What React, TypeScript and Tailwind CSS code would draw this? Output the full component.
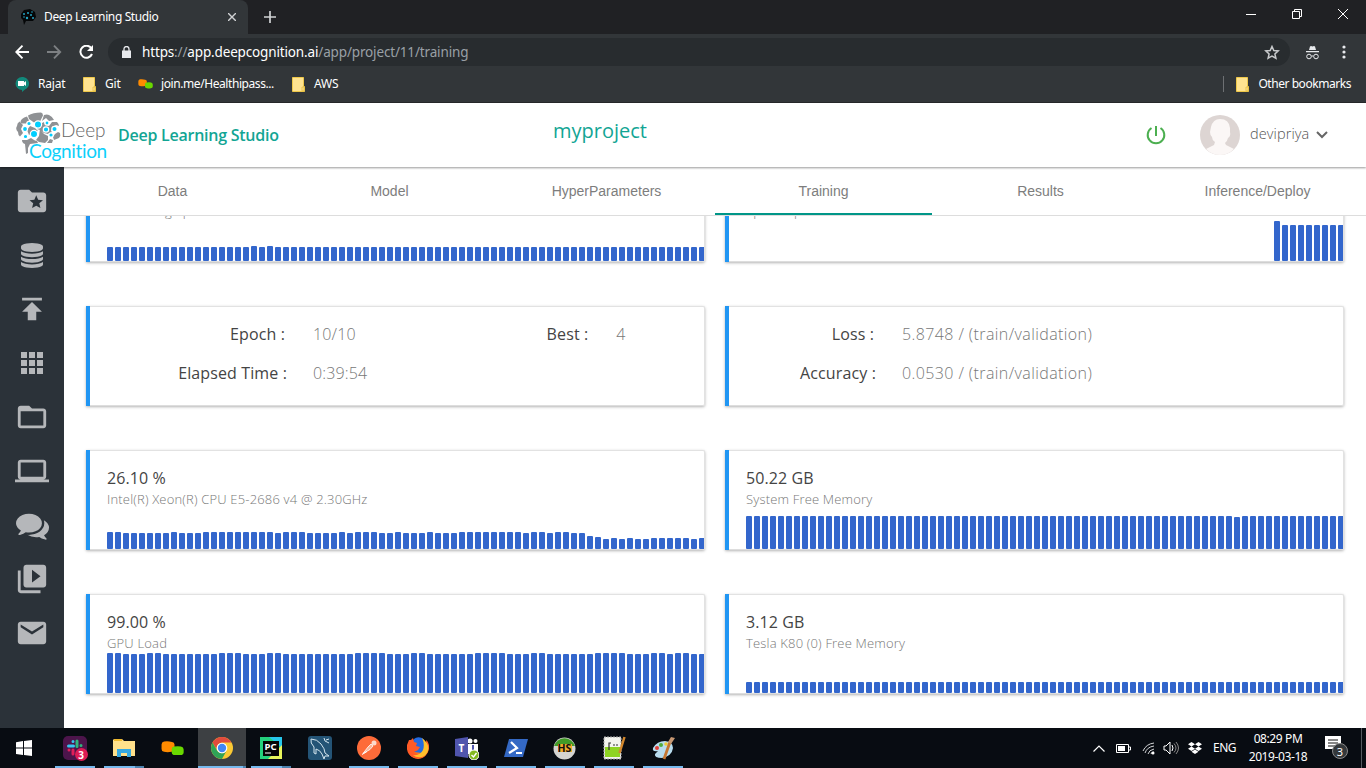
import React from "react";
import { MdFolderSpecial, MdPublish, MdFolderOpen, MdLaptop, MdVideoLibrary, MdEmail } from "react-icons/md";
import { FaDropbox } from "react-icons/fa";

const cpu = "HHLLLLLLHLLLHHHHHHHHHLHHHLLLLHLHHHLLHLLLHLLLHHHHHHHHLHHLHHLL";
const cpuBars = [...cpu].map((c) => (c === "H" ? 17 : 16)).concat([13, 12, 10, 11, 10, 11, 10, 10, 11, 11, 11, 11, 11, 10, 11]);
const gpu = "HHLLLHHLLLLLLLHHHLLLHHLLLLLLLLLHHHHLLLHHLLLLLLHHHHLLLHHLLLLLLHHHHLLLHHLHHLL";
const gpuBars = [...gpu].map((c) => (c === "H" ? 40 : 39));
const batchBars = Array.from({ length: 75 }, (_, i) => (i === 18 || i === 20 ? 15 : 14));
const memBars = Array.from({ length: 75 }, (_, i) => (i === 61 ? 32 : 33));
const teslaBars = Array.from({ length: 75 }, () => 11);
const epochBars = Array.from({ length: 75 }, (_, i) => (i < 66 ? 0 : i === 66 ? 40 : 36));

function Bars({ data }: { data: number[] }) {
  return (
    <div className="absolute bottom-px left-[17px] right-px flex h-10 items-end gap-[2px] overflow-hidden">
      {data.map((h, i) => (
        <div key={i} className="w-[6px] shrink-0 rounded-[1px] bg-[#3366cc]" style={{ height: h }} />
      ))}
    </div>
  );
}

function Card({ children }: { children: React.ReactNode }) {
  return (
    <div className="relative h-[100px] w-[619px] shrink-0 rounded-r-[2px] border-l-4 border-[#2196f3] bg-white shadow-[0_1px_3px_rgba(0,0,0,0.3),inset_0_1px_0_#e2e2e2,inset_-1px_0_0_#e2e2e2,inset_0_-1px_0_#ddd]">
      {children}
    </div>
  );
}

function Metric({ value, label, data }: { value: string; label: string; data: number[] }) {
  return (
    <Card>
      <div className="flex flex-col pl-[17px] pt-[17px]">
        <span className="whitespace-nowrap text-[16px] leading-[22px] tracking-[0.100px] text-[#444]">{value}</span>
        <span className="whitespace-nowrap text-[13px] font-light leading-[20px] tracking-[0.180px] text-[#777]">{label}</span>
      </div>
      <Bars data={data} />
    </Card>
  );
}

function Row({ k, v, kw, vt = "tracking-[0.150px]" }: { k: string; v: string; kw: string; vt?: string }) {
  return (
    <div className="flex h-[39px] items-center text-[16px]">
      <span className={`${kw} whitespace-nowrap text-right tracking-[0.120px] text-[#444]`}>{k}</span>
      <span className={`${vt} whitespace-nowrap font-light text-[#777]`}>{v}</span>
    </div>
  );
}

function BookmarkFolder() {
  return (
    <svg width="13" height="15" viewBox="0 0 13 15">
      <path d="M.5.5h11v9h1v5H.5z" fill="#ffe390" stroke="#efc84a" />
      <path d="M10 10h2v4h-2z" fill="#ffe390" stroke="#e3b93b" strokeWidth=".7" />
    </svg>
  );
}

function JoinMe({ w }: { w: number }) {
  return (
    <svg width={w} height={w * 0.65} viewBox="0 0 23 15">
      <path d="M3 .5Q7-.2 11 1q2.800.5 2.500 3v4q0 2.500-3 2.800-4 .8-7.500 0Q.500 10.500.5 8V3.500Q.500 1 3 .5z" fill="#ff8b00" />
      <path d="M13 5.500q4-.7 7 0 2.700.5 2.700 3v3q0 2.500-3 2.800-3 .6-6 0-3-.3-3-2.800V8q0-2.200 2.300-2.500z" fill="#69d800" />
    </svg>
  );
}

function Brain() {
  return (
    <svg width="46" height="43" viewBox="0 0 46 43">
      <g fill="#8f9194">
        <path d="M12 3.500Q17 .500 25 .500q2 .5 2 3l-3 6-6 1-5-3.500z" />
        <path d="m11 4.500 2 4-3 3-4 0Q3 10 6 7q2-2 5-2.500zM3.500 9.500 7 13l-2 4 2 4-3 3.500Q2 23 2 20q-3-3-1-6 0-3 2.500-4.500z" />
        <path d="m14 14 5 2 3 3-5 1-4 3-2-5z" />
        <path d="M28 3q3-1 5 0 4 2 5 5l-5 1-3-3-4 3z" />
        <path d="M25 11.500 28 10l1 3 4 1 3-4 5 0q2 2 2 4l-3-1-4 2-1 4 1 1-4 2-4-1-4-3-3-1z" />
        <path d="m42 20 2 1q1 3-1 5l-5 2-1-3 2-3zM24 17l4 5 4 2 0 4-3 3-6-1-3-2 3-4z" />
        <path d="M6 28h5l4-2q4 3 6 3l1 2-8 1-2 4v5l-2 1-1-10q-3-1-3-4zM34 27l3 1-1 3-5 0z" />
      </g>
      <g fill="#00cfff" stroke="#fff" strokeWidth="1.200">
        <circle cx="22" cy="12.500" r="3.600" /><circle cx="18" cy="22" r="3.600" /><circle cx="31" cy="11" r="2" />
        <circle cx="13" cy="11.500" r="2.200" /><circle cx="9" cy="17" r="2.500" /><circle cx="9.500" cy="24.500" r="2.200" />
        <circle cx="30" cy="17.500" r="2.700" /><circle cx="38.500" cy="17" r="2.600" /><circle cx="35" cy="23" r="2.200" />
      </g>
    </svg>
  );
}

function Browser() {
  return (
    <header className="flex h-[103px] shrink-0 flex-col bg-[#323639] font-['Noto_Sans'] text-white">
      <div className="flex h-[34px] shrink-0 bg-[#202124] pl-2">
        <div className="flex h-[34px] w-[240px] items-center rounded-t-lg bg-[#323639] pl-[12px] pr-[12px]">
          <svg width="17" height="16" viewBox="0 0 17 16">
            <path d="M1 5 4 1l6-1 5 3 1 5-3 4-7 0-2 4-1-5-2-2z" fill="#050708" />
            <g fill="#25a5c4"><circle cx="4" cy="5" r="1" /><circle cx="8" cy="4" r="1" /><circle cx="7" cy="9" r="1.200" /><circle cx="11" cy="6" r="1" /><circle cx="13" cy="9" r="1" /><circle cx="4" cy="8" r=".8" /><circle cx="12" cy="3" r=".8" /></g>
          </svg>
          <span className="ml-[7px] flex-1 whitespace-nowrap text-[12px] tracking-[-0.380px]">Deep Learning Studio</span>
          <svg width="8" height="8" viewBox="0 0 8 8" stroke="#d0d2d4" strokeWidth="1.400"><path d="m0 0 8 8M8 0 0 8" /></svg>
        </div>
        <svg className="ml-[16px] mt-[11px]" width="12" height="12" stroke="#d0d2d4" strokeWidth="1.700"><path d="M0 6h12M6 0v12" /></svg>
        <div className="ml-auto flex items-start gap-[36px] pr-[18px] pt-[9px]">
          <svg width="10" height="11" stroke="#fff"><path d="M0 5.500h10" /></svg>
          <svg width="10" height="10" stroke="#fff" fill="none"><path d="M.5 2.500h7v7h-7zM2.500 2.500v-2h7v7h-2" /></svg>
          <svg width="10" height="10" stroke="#fff"><path d="m0 0 10 10M10 0 0 10" /></svg>
        </div>
      </div>
      <div className="flex h-[36px] shrink-0 items-center pl-[15px]">
        <svg width="15" height="14" fill="none" stroke="#fff" strokeWidth="1.900"><path d="M14 7H1.500M7.500.7 1.300 7l6.200 6.300" /></svg>
        <svg className="ml-[17px]" width="15" height="14" fill="none" stroke="#7d8083" strokeWidth="1.900"><path d="M0 7h12.500M7 .7 13.200 7 7 13.300" /></svg>
        <svg className="ml-[17px]" width="15" height="14" fill="none" stroke="#fff" strokeWidth="2"><path d="M12.500 3.500A6 6 0 1 0 13 9" /><path d="M14 0v6H8z" fill="#fff" stroke="none" /></svg>
        <div className="ml-[14px] flex h-7 w-[1182px] items-center rounded-full bg-[#282c2f] pl-[14px] pr-[10px]">
          <svg width="9" height="12" fill="none"><path d="M2 5V3a2.500 2.500 0 0 1 5 0v2" stroke="#e8eaed" strokeWidth="1.300" /><path d="M0 4.500h9V12H0z" fill="#e8eaed" /></svg>
          <span className="ml-[11px] whitespace-nowrap text-[13.500px] tracking-[-0.150px] text-[#9aa0a6]"><span className="text-white">https</span>://<span className="text-white">app.deepcognition.ai</span>/app/project/11/training</span>
          <svg className="ml-auto" width="16" height="15" viewBox="0 0 16 15" fill="none" stroke="#c8cacc" strokeWidth="1.500"><path d="m8 1.500 1.800 4 4.400.400-3.300 3 1 4.300L8 11l-3.900 2.200 1-4.300-3.300-3 4.400-.4z" /></svg>
        </div>
        <svg className="ml-[15px]" width="15" height="15" viewBox="0 0 15 15" fill="#e8eaed"><path d="M5 1.500 6 1l1.500.5L9 1l1 .5L11 5H4zM1 6h13v1.200H1z" /><g fill="none" stroke="#e8eaed"><circle cx="4" cy="11.500" r="2.300" /><circle cx="11" cy="11.500" r="2.300" /><path d="M6.500 11h2" /></g></svg>
        <svg className="ml-[22px]" width="4" height="14" fill="#e8eaed"><circle cx="2" cy="2" r="1.600" /><circle cx="2" cy="7" r="1.600" /><circle cx="2" cy="12" r="1.600" /></svg>
      </div>
      <div className="flex h-[33px] shrink-0 items-center border-b border-[#27292b] pb-[5px] pl-[15px] pr-[15px] pt-px text-[12px] tracking-[-0.200px]">
        <svg width="14" height="15" viewBox="0 0 14 15"><path d="M7 0a6.500 6.500 0 0 1 3 12.500L7 15v-2A6.500 6.500 0 0 1 7 0z" fill="#12897b" /><path d="M3 4h6v1.500L11 4v5L9 7.500V9H3z" fill="#fff" /></svg>
        <span className="ml-[9px] w-[45px]">Rajat</span>
        <BookmarkFolder /><span className="ml-[9px] w-[33px]">Git</span>
        <JoinMe w={15} /><span className="ml-[8px] w-[131px] whitespace-nowrap tracking-[-0.420px]">join.me/Healthipass...</span>
        <BookmarkFolder /><span className="ml-[9px]">AWS</span>
        <div className="ml-auto mr-[12px] h-4 w-px bg-[#6d7073]" />
        <BookmarkFolder /><span className="ml-[9px] whitespace-nowrap tracking-[-0.450px]">Other bookmarks</span>
      </div>
    </header>
  );
}

function AppBar() {
  return (
    <div className="z-10 flex h-[64px] shrink-0 items-center bg-white pl-[16px] shadow-[0_1px_2px_rgba(0,0,0,0.4)]">
      <div className="relative mt-[2px] h-[48px] w-[93px]">
        <Brain />
        <span className="absolute left-[45px] top-[8px] font-['Lato'] text-[19px] font-light leading-[20px] text-[#666]">Deep</span>
        <span className="absolute left-[13px] top-[29px] font-['Lato'] text-[19px] leading-[20px] tracking-[-0.350px] text-[#0cd0fb]">Cognition</span>
      </div>
      <span className="ml-[9px] w-[435px] whitespace-nowrap text-[16px] font-semibold tracking-[-0.250px] text-[#12a594]">Deep Learning Studio</span>
      <span className="mb-[8px] whitespace-nowrap text-[20px] text-[#12a594]">myproject</span>
      <svg className="ml-auto" width="20" height="20" fill="none" stroke="#4caf50" strokeWidth="2"><path d="M10 1v10M5.500 3a8.300 8.300 0 1 0 9 0" /></svg>
      <svg className="ml-[34px]" width="40" height="40" viewBox="0 0 40 40">
        <circle cx="20" cy="20" r="20" fill="#ddd5d3" />
        <path d="M11 12q2-8 9-8 9 0 10 9v4q1 4-2 6-1 4-3 5l1 2 8 4q-6 6-14 6T6 34l8-4 1-3q-3-2-3-5-2-2-2-5z" fill="#fbf7f6" />
      </svg>
      <span className="mb-[2px] ml-[10px] w-[60px] text-[14.500px] font-light tracking-[0.100px] text-[#555]">devipriya</span>
      <svg className="ml-[6px] mr-[38px]" width="12" height="8" fill="none" stroke="#666" strokeWidth="2"><path d="m1 1 5 5 5-5" /></svg>
    </div>
  );
}

function DatabaseIcon() {
  return (
    <svg width="22" height="25" viewBox="128 0 1536 1792" preserveAspectRatio="none" fill="currentColor">
      <path d="M896 768q237 0 443-43t325-127v170q0 69-103 128t-280 93.500-385 34.500-385-34.500-280-93.500-103-128v-170q119 84 325 127t443 43zm0 768q237 0 443-43t325-127v170q0 69-103 128t-280 93.500-385 34.500-385-34.500-280-93.500-103-128v-170q119 84 325 127t443 43zm0-384q237 0 443-43t325-127v170q0 69-103 128t-280 93.500-385 34.500-385-34.500-280-93.500-103-128v-170q119 84 325 127t443 43zm0-1152q208 0 385 34.500t280 93.500 103 128v128q0 69-103 128t-280 93.500-385 34.500-385-34.500-280-93.500-103-128v-128q0-69 103-128t280-93.500 385-34.500z" />
    </svg>
  );
}

function CommentsIcon() {
  return (
    <svg width="33" height="33" viewBox="0 0 1792 1792" fill="currentColor">
      <path d="M1408 768q0 139-94 257t-256.500 186.500-353.500 68.500q-86 0-176-16-124 88-278 128-36 9-86 16h-3q-11 0-20.500-8t-11.500-21q-1-3-1-6.500t.5-6.500 2-6l2.500-5 3.500-5.500 4-5 4.500-5 4-4.500q5-6 23-25t26-29.500 22.500-29 25-38.500 20.500-44q-124-72-195-177t-71-224q0-139 94-257t256.500-186.500 353.500-68.500 353.500 68.500 256.500 186.500 94 257zm384 256q0 120-71 224.500t-195 176.500q10 24 20.500 44t25 38.500 22.500 29 26 29.500 23 25q1 1 4 4.500t4.500 5 4 5 3.500 5.500l2.500 5 2 6 .5 6.500-1 6.500q-3 14-13 22t-22 7q-50-7-86-16-154-40-278-128-90 16-176 16-271 0-472-132 58 4 88 4 161 0 309-45t264-129q125-92 192-212t67-254q0-77-23-152 129 71 204 178t75 230z" />
    </svg>
  );
}

function Sidebar() {
  const icons = [
    <MdFolderSpecial size={34} />, <DatabaseIcon />, <MdPublish size={34} />,
    <svg width="22" height="22" fill="currentColor"><path d="M0 0h6v6H0zM8 0h6v6H8zM16 0h6v6h-6zM0 8h6v6H0zM8 8h6v6H8zM16 8h6v6h-6zM0 16h6v6H0zM8 16h6v6H8zM16 16h6v6h-6z" /></svg>,
    <MdFolderOpen size={34} />, <MdLaptop size={34} />, <CommentsIcon />, <MdVideoLibrary size={34} />, <MdEmail size={34} />,
  ];
  return (
    <aside className="flex w-16 shrink-0 flex-col bg-[#2b3239] pt-[7px] text-[#b5b7ba]">
      {icons.map((ic, i) => <div key={i} className="flex h-[54px] items-center justify-center">{ic}</div>)}
    </aside>
  );
}

const tabs = ["Data", "Model", "HyperParameters", "Training", "Results", "Inference/Deploy"];

function Task({ children, split = false, idle = false, active = false }: { children: React.ReactNode; split?: boolean; idle?: boolean; active?: boolean }) {
  return (
    <div className={`flex h-10 shrink-0 flex-col items-center ${active ? "ml-px w-[48px] bg-[#3d4043]" : "w-[49px]"}`}>
      <div className="flex h-[38px] items-center justify-center pt-[2px]">{children}</div>
      {!idle && <div className={`flex h-[2px] ${active ? "w-full" : "w-10"} bg-[#76b9ed]`}>{split && <div className={`ml-auto bg-[#4c82ae] ${active ? "w-[3px]" : "w-[9px]"}`} />}</div>}
    </div>
  );
}

function Taskbar() {
  return (
    <footer className="flex h-10 shrink-0 bg-[#080c12] font-['Noto_Sans'] text-white">
      <div className="flex w-[50px] items-center justify-center pr-[2px]"><svg width="16" height="16" fill="#fff"><path d="M0 2.200 7 1v6.500H0zM8 1l8-1v7.500H8zM0 8.500h7V15l-7-1zM8 8.500h8V16l-8-1z" /></svg></div>
      <Task>
        <div className="relative h-6 w-6 rounded-[5px] bg-[#4c154b]">
          <svg width="24" height="24" fill="none" strokeWidth="3" strokeLinecap="round"><path d="M5.500 10h5M10 5.500v0" stroke="#36c5f0" /><path d="M14 5v5.500M18 9.500v0" stroke="#2eb67d" /><path d="M6 14v0M10 14v4" stroke="#e01e5a" /></svg>
          <div className="absolute left-[12px] top-[12px] flex h-[13px] w-[13px] items-center justify-center rounded-full bg-[#dc1c55] text-[10px] font-bold leading-none">3</div>
        </div>
      </Task>
      <Task split><svg width="22" height="20"><path d="M0 2 1 1h8l2 2h11v15H0z" fill="#ffe18b" /><path d="M1 1h8v2H1z" fill="#efb92e" /><path d="M4 18v-7h14v8h-4v-4H8v4H4z" fill="#36a9e1" /></svg></Task>
      <Task idle><JoinMe w={23} /></Task>
      <Task active split>
        <svg width="22" height="22" viewBox="0 0 22 22"><circle cx="11" cy="11" r="11" fill="#fbc934" /><path d="M1.500 5.500A11 11 0 0 1 20.500 5.500H11A5.500 5.500 0 0 0 6 13z" fill="#e14b3d" /><path d="M1.500 5.500A11 11 0 0 0 11 22l4.500-8.200A5.500 5.500 0 0 1 6.200 13.700z" fill="#2fa457" /><circle cx="11" cy="11" r="5.300" fill="#fff" /><circle cx="11" cy="11" r="4.200" fill="#4286f5" /></svg>
      </Task>
      <Task split>
        <svg width="22" height="22"><path d="M0 0h22v22H0z" fill="#24d17d" /><path d="M9 0h13v11z" fill="#27c7ec" /><path d="M22 8v14H8z" fill="#e8f65b" /><path d="M3 4h16v15H3z" fill="#050505" /><text x="4.500" y="12.500" fill="#fff" fontSize="9.500" fontWeight="bold" fontFamily="Noto Sans">PC</text><path d="M5 16h6" stroke="#fff" /></svg>
      </Task>
      <Task idle><svg width="24" height="24" fill="none" stroke="#d5e6ef"><rect width="24" height="24" rx="3" fill="#245476" stroke="none" /><path d="M3 3q6 0 10 5t4 9l4 3-4 0-1 3-2-5Q12 14 8 13v5L6 17V11Q2 7 3 3zM16 2l1 3 4 2M21 3l-3 1" /></svg></Task>
      <Task><svg width="24" height="24"><circle cx="12" cy="12" r="12" fill="#fd6b39" /><path d="m6 17.500 5-6.500 3-3 2 2-3 3.500z" fill="#f9b79c" stroke="#fff" strokeWidth=".8" /><circle cx="17" cy="7" r="2.500" fill="#fbd9cb" /><path d="m5 18.500 5-3" stroke="#fff" /></svg></Task>
      <Task><svg width="22" height="22"><circle cx="11" cy="12" r="10" fill="#ff7a19" /><path d="M4 5 7 2q3-3 8-1 4 3 4 9l-4 6-8-1z" fill="#246be0" /><path d="M2 3 0 8q-1 8 5 12 6 3 12 0 6-5 5-12-1-4-3-5 1 8-3 12-5 4-9 0l4-2 2-3-4-1 1-3-3-1-1-4-2 2z" fill="#ff5a26" /><path d="M15 1q8 6 6 13-2 5-6 6-6 1-9-2 7 1 10-5 2-6-1-12z" fill="#ffc02b" /></svg></Task>
      <Task>
        <svg width="24" height="24"><path d="M12 8h11v10H12z" fill="#fff" /><circle cx="15" cy="5" r="2.500" fill="#fff" /><circle cx="20.500" cy="5" r="2" fill="#fff" /><path d="M17 9h2v9h-2z" fill="#5055ad" /><path d="M0 3 13 1v21L0 20z" fill="#5055ad" /><text x="3.500" y="15.500" fill="#fff" fontSize="10" fontWeight="bold" fontFamily="Noto Sans">T</text><circle cx="19" cy="19" r="5" fill="#83b91d" stroke="#fff" /><path d="m16.500 19 2 2 3-4" fill="none" stroke="#fff" strokeWidth="1.400" /></svg>
      </Task>
      <Task><svg width="24" height="18"><path d="M5 0h19l-5 18H0z" fill="#3469c4" /><path d="m7 3 6 6-8 5M12 14h6" fill="none" stroke="#fff" strokeWidth="2.200" /></svg></Task>
      <Task><svg width="23" height="23"><circle cx="11.500" cy="11.500" r="11" fill="#d4d4d1" /><path d="M1 9a11 11 0 0 1 21 0z" fill="#419b27" /><path d="M5 7h14v8H5z" fill="#f0aa2a" /><text x="4.500" y="15" fill="#111" fontSize="10.500" fontWeight="bold" fontFamily="Noto Sans">HS</text></svg></Task>
      <Task><svg width="24" height="24"><path d="M2 1h17v22H2z" fill="#f4f4ee" stroke="#aaa" strokeDasharray="2 1" /><path d="M3 11h15v10H3z" fill="#8ed422" /><path d="M7 14V7h2M11 9h2M14 9h2" fill="none" stroke="#333" strokeWidth="1.200" /><path d="m22.500 1-5 16" stroke="#d4882c" strokeWidth="2.500" /></svg></Task>
      <Task><svg width="24" height="24"><path d="M2 12q4-7 12-7 8 1 8 7-1 8-11 10-8 0-7-4l3-3q-6 1-5-3z" fill="#b8dcee" /><circle cx="6" cy="12" r="2" fill="#e13f36" /><circle cx="10" cy="9" r="2" fill="#51ac3d" /><circle cx="15" cy="8" r="1.800" fill="#efcb36" /><path d="m13 23 6-17" stroke="#c57631" strokeWidth="2.800" /><path d="m17 6 3-5 4 1-4 6z" fill="#c69772" /></svg></Task>
      <div className="ml-auto flex items-center">
        <svg width="12" height="7" fill="none" stroke="#fff" strokeWidth="1.200"><path d="m.5 6.500 5.500-5.500 5.500 5.500" /></svg>
        <svg className="ml-[11px]" width="15" height="10" fill="none" stroke="#fff"><path d="M.5 1.500h12v8H.5zM13 4h1.500v3H13" /><path d="M2 3h7v5H2z" fill="#fff" stroke="none" /></svg>
        <svg className="ml-[11px]" width="13" height="13" fill="none" stroke="#d4d6d8"><path d="M1 9Q4 2 12 1M3 11Q5 5 12 4M6 12q1-4 6-5M9 12q0-2 3-2" /><circle cx="11" cy="11" r="1.500" fill="#fff" stroke="none" /></svg>
        <svg className="ml-[8px]" width="17" height="14" fill="none" stroke="#fff"><path d="M1 5h2l4-4v12l-4-4H1zM9 4q2 3 0 6" /><path d="M11 2.500q4 4.500 0 9M13 1q5 6 0 12" stroke="#888" /></svg>
        <FaDropbox size={14} className="ml-[8px]" />
        <span className="ml-[11px] w-[23px] text-[12px] tracking-[-0.500px]">ENG</span>
        <div className="ml-[12px] flex w-[60px] flex-col items-center text-[12px] leading-[18px] tracking-[-0.400px]"><span className="whitespace-nowrap">08:29 PM</span><span className="whitespace-nowrap">2019-03-18</span></div>
        <div className="relative ml-[17px] h-6 w-[25px]">
          <svg width="17" height="17"><path d="M0 0h16v13h-4l-3 3v-3H0z" fill="#fff" /><path d="M3 4h10M3 7h10M3 10h7" stroke="#111" /></svg>
          <div className="absolute left-[7px] top-[7px] flex h-[16px] w-[16px] items-center justify-center rounded-full border border-[#888] bg-[#34383b] text-[11px] leading-none">3</div>
        </div>
        <div className="ml-[11px] mr-[4px] h-10 w-px bg-[#555a60]" />
      </div>
    </footer>
  );
}

export default function App() {
  return (
    <div className="flex h-[768px] w-[1366px] flex-col overflow-hidden bg-white font-['Open_Sans',sans-serif]">
      <Browser />
      <AppBar />
      <div className="flex min-h-0 flex-1">
        <Sidebar />
        <main className="flex min-w-0 flex-1 flex-col">
          <nav className="grid h-[49px] shrink-0 grid-cols-6 border-b border-[#ddd] font-['Liberation_Sans'] text-[14px] text-[#7d7d7d]">
            {tabs.map((t) => (
              <div key={t} className={`flex items-center justify-center border-b-2 pt-[2px] ${t === "Training" ? "border-[#009688]" : "border-transparent"}`}>{t}</div>
            ))}
          </nav>
          <div className="min-h-0 flex-1 overflow-hidden pl-[22px]">
            <div className="-mt-[54px] grid grid-cols-[619px_619px] gap-x-[20px] gap-y-[44px]">
              <Metric value="12.50" label="Processing Speed" data={batchBars} />
              <Metric value="10" label="Epoch Speed" data={epochBars} />
              <Card>
                <div className="flex pt-[8px]">
                  <div>
                    <Row k="Epoch :" v="10/10" kw="w-[195px] mr-[28px]" />
                    <Row k="Elapsed Time :" v="0:39:54" kw="w-[197px] mr-[26px]" />
                  </div>
                  <div className="ml-[130px]"><Row k="Best :" v="4" kw="w-[91px] mr-[28px]" /></div>
                </div>
              </Card>
              <Card>
                <div className="pt-[8px]">
                  <Row k="Loss :" v="5.8748 / (train/validation)" kw="w-[145px] mr-[28px]" vt="tracking-[0.400px]" />
                  <Row k="Accuracy :" v="0.0530 / (train/validation)" kw="w-[147px] mr-[26px]" vt="tracking-[0.400px]" />
                </div>
              </Card>
              <Metric value="26.10 %" label="Intel(R) Xeon(R) CPU E5-2686 v4 @ 2.30GHz" data={cpuBars} />
              <Metric value="50.22 GB" label="System Free Memory" data={memBars} />
              <Metric value="99.00 %" label="GPU Load" data={gpuBars} />
              <Metric value="3.12 GB" label="Tesla K80 (0) Free Memory" data={teslaBars} />
            </div>
          </div>
        </main>
      </div>
      <Taskbar />
    </div>
  );
}
